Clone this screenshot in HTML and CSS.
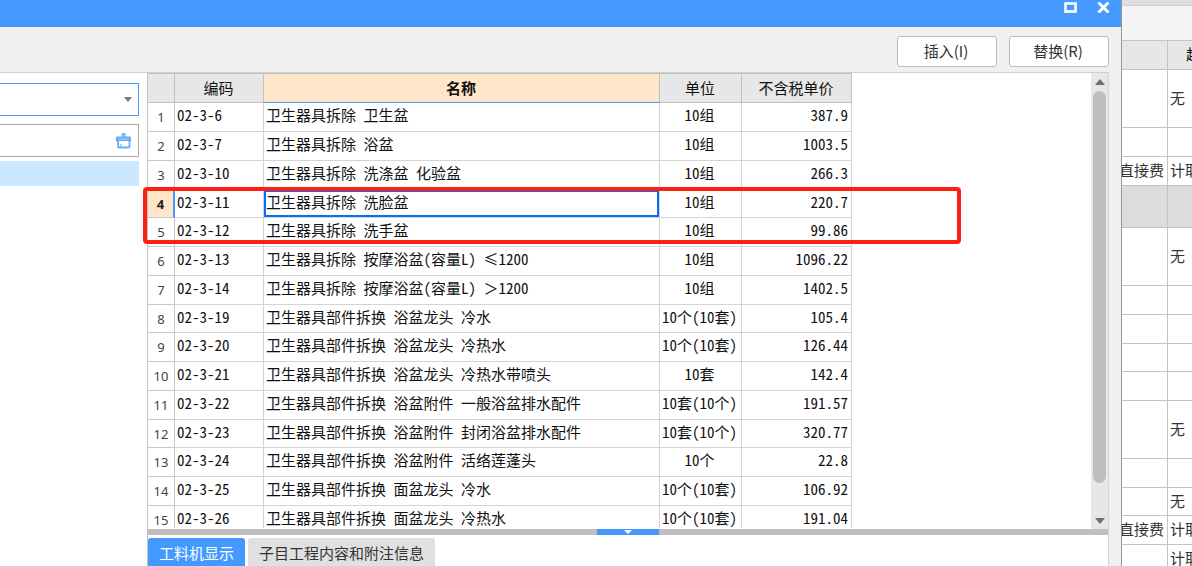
FILE: index.html
```html
<!DOCTYPE html>
<html lang="zh-CN">
<head>
<meta charset="utf-8">
<title>工料机显示</title>
<link rel="stylesheet" href="styles.css">
</head>
<body>
<div class="desktop">
  <section class="dialog">
    <header class="titlebar">
      <button class="win-btn" aria-label="最大化"><svg width="13" height="11" viewBox="0 0 13 11"><rect x="1.5" y="1.5" width="10" height="8" fill="none" stroke="#fff" stroke-width="2.6"/></svg></button>
      <button class="win-btn" aria-label="关闭"><svg width="13" height="11" viewBox="0 0 13 11"><path d="M1.500 .5 11.500 10.500M11.500 .5 1.500 10.500" fill="none" stroke="#fff" stroke-width="3"/></svg></button>
    </header>
    <div class="toolbar">
      <button class="action">插入(I)</button>
      <button class="action">替换(R)</button>
    </div>
    <div class="body">
      <aside class="sidebar">
        <div class="field">
          <select class="combo" aria-label="定额库"><option></option></select>
          <svg class="caret" width="8" height="5" viewBox="0 0 8 5"><path d="M0 0h8L4 5z" fill="#777"/></svg>
        </div>
        <div class="field">
          <input class="search" type="text" aria-label="查询">
          <button class="clear" aria-label="清除"><svg width="15" height="16" viewBox="0 0 15 16"><rect x="5.500" y="0" width="4" height="5" rx="1" fill="#7db6fc"/><rect x="0" y="3.500" width="15" height="5" rx="1" fill="#69acfb"/><path d="M2.500 6h10" stroke="#a9d0ff"/><path d="M2 8v5.500q0 1 1 1h9.500q1 0 1-1V8" fill="#fff" stroke="#69acfb" stroke-width="1.800"/><path d="M5 14v-3" fill="none" stroke="#8fc0fc" stroke-width="1.400"/></svg></button>
        </div>
        <div class="picked"></div>
      </aside>
      <main class="main">
        <div class="upper">
          <div class="viewport">
            <table class="items">
              <colgroup><col class="c-num"><col class="c-code"><col class="c-name"><col class="c-unit"><col class="c-price"></colgroup>
              <thead><tr><th></th><th>编码</th><th class="active">名称</th><th>单位</th><th>不含税单价</th></tr></thead>
              <tbody>
                <tr><th>1</th><td>02-3-6</td><td>卫生器具拆除 卫生盆</td><td>10组</td><td>387.9</td></tr>
                <tr><th>2</th><td>02-3-7</td><td>卫生器具拆除 浴盆</td><td>10组</td><td>1003.5</td></tr>
                <tr><th>3</th><td>02-3-10</td><td>卫生器具拆除 洗涤盆 化验盆</td><td>10组</td><td>266.3</td></tr>
                <tr class="current"><th>4</th><td>02-3-11</td><td>卫生器具拆除 洗脸盆</td><td>10组</td><td>220.7</td></tr>
                <tr><th>5</th><td>02-3-12</td><td>卫生器具拆除 洗手盆</td><td>10组</td><td>99.86</td></tr>
                <tr><th>6</th><td>02-3-13</td><td>卫生器具拆除 按摩浴盆(容量L) ≤1200</td><td>10组</td><td>1096.22</td></tr>
                <tr><th>7</th><td>02-3-14</td><td>卫生器具拆除 按摩浴盆(容量L) <span class="full">＞</span>1200</td><td>10组</td><td>1402.5</td></tr>
                <tr><th>8</th><td>02-3-19</td><td>卫生器具部件拆换 浴盆龙头 冷水</td><td>10个(10套)</td><td>105.4</td></tr>
                <tr><th>9</th><td>02-3-20</td><td>卫生器具部件拆换 浴盆龙头 冷热水</td><td>10个(10套)</td><td>126.44</td></tr>
                <tr><th>10</th><td>02-3-21</td><td>卫生器具部件拆换 浴盆龙头 冷热水带喷头</td><td>10套</td><td>142.4</td></tr>
                <tr><th>11</th><td>02-3-22</td><td>卫生器具部件拆换 浴盆附件 一般浴盆排水配件</td><td>10套(10个)</td><td>191.57</td></tr>
                <tr><th>12</th><td>02-3-23</td><td>卫生器具部件拆换 浴盆附件 封闭浴盆排水配件</td><td>10套(10个)</td><td>320.77</td></tr>
                <tr><th>13</th><td>02-3-24</td><td>卫生器具部件拆换 浴盆附件 活络莲蓬头</td><td>10个</td><td>22.8</td></tr>
                <tr><th>14</th><td>02-3-25</td><td>卫生器具部件拆换 面盆龙头 冷水</td><td>10个(10套)</td><td>106.92</td></tr>
                <tr><th>15</th><td>02-3-26</td><td>卫生器具部件拆换 面盆龙头 冷热水</td><td>10个(10套)</td><td>191.04</td></tr>
              </tbody>
            </table>
          </div>
          <div class="scrollbar">
            <svg width="10" height="6" viewBox="0 0 10 6"><path d="M0 6h10L5 0z" fill="#6e6e73"/></svg>
            <div class="thumb"></div>
            <svg width="10" height="6" viewBox="0 0 10 6"><path d="M0 0h10L5 6z" fill="#6e6e73"/></svg>
          </div>
          <div class="mark"></div>
        </div>
        <div class="splitter"><button class="grip" aria-label="折叠"><svg width="8" height="4" viewBox="0 0 8 4"><path d="M0 0h8L4 4z" fill="#fff"/></svg></button></div>
        <nav class="tabs">
          <button class="tab on">工料机显示</button>
          <button class="tab">子目工程内容和附注信息</button>
        </nav>
      </main>
    </div>
  </section>
  <section class="behind">
    <div class="strip"></div>
    <div class="ribbon"></div>
    <table class="fees">
      <colgroup><col class="f-base"><col class="f-rule"></colgroup>
      <thead><tr><th></th><th class="wide">超高</th></tr></thead>
      <tbody>
        <tr class="tall"><td></td><td>无</td></tr>
        <tr><td></td><td></td></tr>
        <tr><td><span>直接费</span></td><td>计取</td></tr>
        <tr class="group"><td></td><td></td></tr>
        <tr class="tall"><td></td><td>无</td></tr>
        <tr><td></td><td></td></tr>
        <tr><td></td><td></td></tr>
        <tr class="short"><td></td><td></td></tr>
        <tr><td></td><td></td></tr>
        <tr class="tall"><td></td><td>无</td></tr>
        <tr><td></td><td></td></tr>
        <tr class="short"><td></td><td>无</td></tr>
        <tr><td><span>直接费</span></td><td>计取</td></tr>
        <tr><td></td><td>计取</td></tr>
      </tbody>
    </table>
  </section>
</div>
</body>
</html>
```
FILE: styles.css
```css
* { box-sizing: border-box; }
body {
  margin: 0;
  overflow: hidden;
  font: 15px/20px "Noto Sans CJK SC", sans-serif;
  color: #111;
}
button, input, select { font: inherit; color: inherit; margin: 0; }
button { padding: 0; border: 0; background: none; }
svg { display: block; }
table { border-collapse: separate; border-spacing: 0; table-layout: fixed; }
th { font-weight: 400; }

.desktop { display: flex; height: 100vh; }
.dialog {
  flex: 1;
  min-width: 0;
  display: flex;
  flex-direction: column;
  background: #f0f0f0;
}
.titlebar {
  height: 27px;
  flex: none;
  display: flex;
  justify-content: flex-end;
  gap: 20px;
  padding: 2px 11px 0 0;
  background: #4499ff;
}
.win-btn { height: 11px; }
.toolbar {
  height: 45px;
  flex: none;
  display: flex;
  justify-content: flex-end;
  gap: 12px;
  padding: 9px 12px 5px;
}
.action {
  width: 100px;
  height: 31px;
  padding: 0 2px 2px 0;
  border: 1px solid #bdbdbd;
  border-radius: 3px;
  background: #fff;
  color: #333;
}
.body {
  flex: 1;
  min-height: 0;
  display: flex;
  margin-right: 12px;
  border-top: 1px solid #cfcfcf;
  border-right: 1px solid #d4d4d4;
  background: #fff;
}

.sidebar { width: 147px; flex: none; padding: 10px 8px 0 0; }
.field { position: relative; margin: 0 0 8px -4px; }
.combo, .search {
  display: block;
  width: 100%;
  height: 33px;
  border: 1px solid #4499ff;
  border-radius: 0;
  background: #fff;
  appearance: none;
  outline: 0;
}
.search { border-color: #aaa; }
.caret { position: absolute; right: 7px; top: 14px; }
.clear { position: absolute; right: 8px; top: 9px; }
.picked { height: 25px; margin-top: -4px; background: #cce8ff; }

.main {
  flex: 1;
  min-width: 0;
  display: flex;
  flex-direction: column;
  border-left: 1px solid #c4c4c4;
}
.upper { position: relative; flex: 1; min-height: 0; display: flex; }
.viewport { flex: 1; min-width: 0; margin-bottom: 1px; overflow: hidden; }

.items { width: 704px; line-height: 18px; font-feature-settings: "hwid"; }
.full { font-feature-settings: normal; }
.c-num { width: 27px; }
.c-code { width: 89px; }
.c-name { width: 396px; }
.c-unit { width: 82px; }
.c-price { width: 110px; }
.items th, .items td {
  height: 29px;
  padding: 0 3px 4px 2px;
  border: solid #d4d4d4;
  border-width: 0 1px 1px 0;
  white-space: nowrap;
}
.items thead th {
  height: 30px;
  border-color: #c0c0c0;
  border-top-width: 1px;
  padding-bottom: 0;
  background: #e7e7e7;
}
.items thead .active {
  background: #ffe6c9;
  border-bottom-color: #4499ff;
  font-weight: 700;
}
.items tbody tr:nth-child(4n) > * { height: 28px; }
.items tbody th {
  padding: 0;
  border-color: #c8c8c8;
  font: 13px/18px "Noto Sans", sans-serif;
  color: #444;
}
.items td:nth-child(4) { text-align: center; padding-left: 0; padding-right: 2px; }
.items td:nth-child(5) { text-align: right; }
.items .current th {
  background: #ffe6c9;
  border-right: 2px solid #4499ff;
  font-weight: 700;
  color: #222;
}
.items .current td:nth-child(3) { box-shadow: inset 0 0 0 2px #0a6cff; }

.scrollbar {
  width: 17px;
  flex: none;
  display: flex;
  flex-direction: column;
  align-items: center;
  gap: 6px;
  padding: 6px 0 5px;
  background: #e7e7e7;
}
.scrollbar svg { flex: none; }
.thumb { width: 13px; flex: 1; margin-bottom: 29px; border-radius: 7px; background: #bebebe; }
.mark {
  position: absolute;
  left: -5px;
  top: 114px;
  width: 818px;
  height: 57px;
  border: 4px solid #ff1f10;
  border-radius: 4px;
}
.splitter {
  height: 6px;
  flex: none;
  display: flex;
  justify-content: center;
  background: #bfbfbf;
}
.grip {
  width: 62px;
  height: 6px;
  display: flex;
  align-items: center;
  justify-content: center;
  background: #4499ff;
}
.tabs { flex: none; height: 31px; display: flex; gap: 3px; padding-top: 3px; }
.tab {
  padding: 2px 11px 0;
  border-radius: 3px 3px 0 0;
  background: #e0e0e0;
  color: #333;
}
.tab.on { background: #4499ff; color: #fff; }

.behind {
  width: 71px;
  flex: none;
  overflow: hidden;
  border-left: 1px solid #999;
  background: #fff;
}
.strip { height: 5px; background: #dedede; }
.ribbon { height: 35px; border-top: 1px solid #d0d0d0; background: #f4f4f4; }
.fees { width: 100px; }
.f-base { width: 46px; }
.f-rule { width: 54px; }
.fees th, .fees td {
  height: 29px;
  padding: 0 3px 2px 2px;
  border: solid #c4c4c4;
  border-width: 0 1px 1px 0;
  white-space: nowrap;
  color: #333;
}
.fees th { height: 30px; border-top-width: 1px; background: #e7e7e7; color: #111; }
.fees .wide { text-align: left; padding-left: 18px; }
.fees .tall td { height: 58px; }
.fees .short td { height: 28px; }
.fees .group td { height: 42px; background: #dcdcdc; }
.fees td:first-child { padding-left: 0; }
.fees span { display: flex; justify-content: flex-end; }
```
